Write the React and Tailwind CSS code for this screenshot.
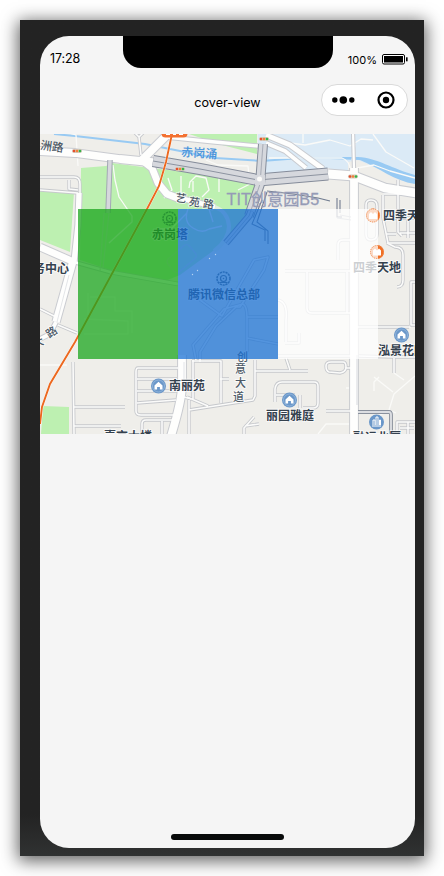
import React from 'react';

const GREEN = '#bdf0b1';
const CJK = '"Noto Sans", "Noto Sans CJK SC", sans-serif';

const majorRoads = [
  ['M40 151 L75 153 L120 159 L160 163', 8],
  ['M166 136 L142 160', 8],
  ['M143 161 L152 168 L158 183 L167 194 L180 199', 7],
  ['M176 197 L215 207', 5],
  ['M40 247 L74 262', 7],
  ['M74 262 L110 272 L178 284', 3],
  ['M73 261 L56 322', 7.5],
  ['M56 322 L50 334 L40 339', 4],
  ['M79 193 L78 225 L74 262', 5.5],
  ['M182 355 V385 Q182 400 171 436', 8],
  ['M354 168 L354 436', 8],
  ['M353 131 L354 168', 2.4],
  ['M328 174 L354 176 L385 188 L416 193', 9],
  ['M166 137 L215 142 L258 146', 3.5],
  ['M266 135 L290 145 L323 169', 5],
  ['M266 143 L285 151 L306 168', 4],
];

const minorRoads = [
  'M134 132 L139 137 L144 132 M139 137 L141 155',
  'M40 177 H74 Q80 177 80 184 V194 M40 190 L78 193 M69 180 V189 L78 190',
  'M40 309 L56 317 M58 325 L77 333',
  'M73 362 L74 434 M74 407 H125 M74 426 H121',
  'M178 368 H138 Q136 368 136 372 V411 Q136 415 141 415 H176 M137 379 H177 M137 391 H177 M137 403 L176 400',
  'M142 434 V424 Q142 420 146 420 H172 M162 434 V421',
  'M193 360 V400 M189 400 V434 M192 361 H221 V403 M187 397 L208 406 M189 410 L240 402 L253 400 L255 396 V360 M220 379 H229',
  'M255 371 H308 M286 358 L290 370 M184 397 L191 399',
  'M275 402 V389 Q276 382 282 382 H314 Q318 382 318 386 V403 Q318 408 313 408 H303 M276 395 H295 M300 395 V408',
  'M244 434 V428 L254 417 M245 426 L259 424',
  'M326 366 Q326 362 331 362 H343 Q346 362 346 367 Q346 372 340 373 L329 372 Q326 371 326 366 Z M345 368 H352',
  'M326 411 H352 M359 356 L393 357 H415 M394 358 V373',
  'M397 434 V422 H415 M400 428 H414 M408 422 V434',
  'M415 282 H411 V325 H415 M355 327 H409 M397 287 Q403 287 403 280 V255 Q403 247 395 247 L387 243',
  'M366 205 Q366 200 371 200 Q377 200 377 206 V234 Q377 240 371 240 Q366 240 366 234 Z',
  'M383 218 V195 M383 194 H415 M398 180 V232 L402 236 M388 218 H398 M383 218 L388 243 H415 M386 234 H396 M400 233 H415 M408 218 V238 M402 218 H415',
  'M338 260 V245 Q338 240 343 240 H352 M285 271 H352 M307 272 V308 Q307 313 312 313 H352 M347 272 V313',
  'M285 343 H299 V333 M278 356 H352 M278 300 Q288 302 286 320 V342',
  'M200 300 L222 316 L254 260 L268 257 L264 270 L240 307 L236 307 L216 326 L200 352 V362 M196 360 L193 345 L224 309 L243 304 Q247 306 247 318 V352 M247 317 H278 M247 338 L278 344',
];

const parkPaths = [
  'M60 130 L76 135 L78 166',
  'M113 165 L115 180 L119 197 L132 216 L132 222 L109 243',
  'M181 176 V199 M219 178 V192 M193 181 V192',
  'M168 178 L172 190 L164 198 M189 188 L190 182 L196 176 L206 178 L209 190 L202 197 M206 160 L218 165 L248 166 L250 184 L238 190',
  'M188 209 Q183 222 193 228 Q202 234 209 229 M209 229 L222 226 M160 229 L171 229 L187 213 M209 209 L213 222',
  'M303 132 V143 M283 142 L305 145 L330 140 L350 146 L361 139 L373 140 M373 134 L386 152 L414 168 M355 144 L352 160',
  'M269 158 H342 Q349 160 351 171 M357 168 L374 165 L390 171 L415 178',
  'M40 365 H67 M380 327 H411',
  'M374 391 V382 L379 377 M374 377 L393 392 M394 373 L404 380 M415 376 L394 394 L389 410 M350 388 H346 M318 434 L326 424 H350 M376 418 Q388 408 396 413',
  'M88 293 V315 M84 319 L128 321 V334 H84 M90 297 H115 V311 H132 V333',
];

function Roads() {
  return (
    <g fill="none" strokeLinejoin="round" strokeLinecap="butt">
      {parkPaths.map((d) => <path key={d} d={d} stroke="#fafaf8" strokeWidth="1.3" />)}
      <path d="M215 207 Q228 212 229 226 Q229 240 214 251" stroke="#e3efdf" strokeWidth="4" />
      {minorRoads.map((d) => <path key={d} d={d} stroke="#c6c8cc" strokeWidth="3.3" />)}
      {majorRoads.map(([d, w]) => <path key={d} d={d} stroke="#c9cbd0" strokeWidth={w + 1.8} />)}
      {minorRoads.map((d) => <path key={d} d={d} stroke="#fbfbfa" strokeWidth="1.6" />)}
      {majorRoads.map(([d, w]) => <path key={d} d={d} stroke="#fefefd" strokeWidth={w - 0.2} />)}
      <path d="M69 275 L57 322 M184 362 V385" stroke="#dcdee2" strokeWidth=".8" />
      <path d="M357 355 V405" stroke="#d7d9dd" strokeWidth="1" />
    </g>
  );
}

// Elevated expressways: dark edges with a grey surface.
function Viaduct({ d, width, edge = '#858c9a' }) {
  return (
    <g fill="none" strokeLinejoin="round">
      <path d={d} stroke={edge} strokeWidth={width} />
      <path d={d} stroke="#d6d8dd" strokeWidth={width - 2} />
    </g>
  );
}

function TrafficLight({ x, y }) {
  return (
    <g>
      <rect x={x - 5} y={y - 2} width="10" height="4" rx="2" fill="#d5c8ba" />
      <circle cx={x - 3} cy={y} r="1.3" fill="#e5502e" />
      <circle cx={x} cy={y} r="1.3" fill="#f08338" />
      <circle cx={x + 3} cy={y} r="1.3" fill="#36b44a" />
    </g>
  );
}

function HomePin({ x, y }) {
  return (
    <g>
      <circle cx={x} cy={y} r="7.5" fill="#6a97c9" />
      <circle cx={x} cy={y} r="6" fill="none" stroke="#9dbde0" strokeWidth=".7" />
      <path d={`M${x} ${y - 4.2} l4 3.8 v4 h-2.6 v-2.5 h-2.8 v2.500 h-2.6 v-4 z`} fill="#fff" />
    </g>
  );
}

function ShopPin({ x, y }) {
  return (
    <g>
      <circle cx={x} cy={y} r="7" fill="#f06f24" />
      <path d={`M${x - 4} ${y + 3.5} v-5 l2 -2 l2 2 l2 -2 l2 2 v5 z`} fill="#fff" />
    </g>
  );
}

function RingPin({ x, y }) {
  return (
    <g fill="none" stroke="#4c6072">
      <circle cx={x} cy={y} r="6.5" strokeWidth="1.5" strokeDasharray="2.2 .7" />
      <circle cx={x} cy={y} r="3" strokeWidth="1.2" />
      <circle cx={x} cy={y} r=".8" fill="#4c6072" stroke="none" />
      <path d={`M${x - 4} ${y + 4} h8`} strokeWidth="1" />
    </g>
  );
}

function Place({ x, y, children }) {
  return (
    <text x={x} y={y} fontSize="12" fontWeight="700" fill="#34414e" stroke="#fff" strokeWidth="1.6"
      strokeOpacity=".75" paintOrder="stroke" textAnchor="middle">{children}</text>
  );
}

function StreetChar({ x, y, angle = 0, children }) {
  return (
    <text x="0" y="4" textAnchor="middle" transform={`translate(${x} ${y}) rotate(${angle})`}
      stroke="#fff" strokeWidth="1.6" strokeOpacity=".8" paintOrder="stroke">{children}</text>
  );
}

function CityMap() {
  return (
    <svg className="block h-[300px] w-[375px]" viewBox="40 134 375 300" style={{ fontFamily: CJK }}>
      <rect x="40" y="134" width="375" height="300" fill="#efeeea" />
      <path d="M258 134 H415 V183 L386 172 L358 160 L348 162 V174 L328 168 L258 178 Z" fill="#dbeaf6" />
      <path d="M189 134 H257 V154 L222 145 Z" fill={GREEN} />
      <path d="M81 168 L106 166 L112 163 L143 167 L160 169 L200 174 L258 186 L250 212 L243 226 L228 240 L180 275 L165 281 L142 279 L110 270 L80 260 Z" fill={GREEN} />
      <path d="M40 190 L74 192 L70 252 L40 240 Z" fill={GREEN} />
      <path d="M43 406 L69 407 V434 H41 Z" fill={GREEN} />
      <path d="M54 134 L75 136 L145 144 L215 158 L262 161 L300 158 H345" fill="none" stroke="#98caf3" strokeWidth="2" />
      <path d="M330 157 H358 C378 158 392 169 415 175 V184 C394 181 380 168 360 160 L330 159 Z" fill="#98caf3" />
      <Roads />
      <Viaduct d="M153 161 L200 169 L258 180" width={12} />
      <Viaduct d="M258 180 L328 174" width={13} />
      <Viaduct d="M263 144 L260 184 L249 216" width={10} />
      <Viaduct d="M251 211 L249 216 L226 243" width={7} />
      <path d="M153 161 L200 169 L258 180 L328 174" fill="none" stroke="#8c93a0" strokeWidth="1" />
      <path d="M263 144 L260 184 L249 216 L226 243" fill="none" stroke="#9aa0ac" strokeWidth=".8" />
      <Viaduct d="M110 160 L108 213" width={5.5} edge="#a3a8b4" />
      <path d="M104 213 L100 271 M109 213 L103 268" fill="none" stroke="#d5dad5" strokeWidth="1" />
      <path d="M255 180 H265" stroke="#d6d8dd" strokeWidth="10" />
      <circle cx="259.500" cy="179" r="2.500" fill="#fafaf8" />
      <path d="M267 191 L293 194 L318 198 L330 201 M337 198 V217 H342 M340 200 V213 M262 200 L252 224 L265 230 V241 M267 192 L257 222 L268 231 V244" fill="none" stroke="#717c90" strokeWidth="1.1" />
      <path d="M340 215 L351 217 M337 218 L351 220" fill="none" stroke="#b9bdc5" strokeWidth="1" />
      <path d="M358 412 H389 Q391 412 391 415 V434" fill="none" stroke="#8a919d" strokeWidth="3.800" />
      <path d="M358 412 H389 Q391 412 391 415 V434" fill="none" stroke="#dcdee2" strokeWidth="1.900" />
      <path d="M172 134 L166 162 L159 186 L147 209 L75 342 L50 384 L42 407 L40 424" fill="none" stroke="#fff" strokeWidth="2.600" />
      <path d="M172 134 L166 162 L159 186 L147 209 L75 342 L50 384 L42 407 L40 424" fill="none" stroke="#ec681f" strokeWidth="1.900" />
      <rect x="161.500" y="128" width="26" height="9.500" rx="4" fill="#f37131" />
      <path d="M166 134.500 h4 m3 0 h3 m3 0 h4" stroke="#fff" strokeWidth="1.200" />
      <rect x="168" y="250" width="28" height="17" rx="4" transform="rotate(-40 182 259)" fill="none" stroke="#cdd6d2" strokeWidth="1" />
      <TrafficLight x={77} y={151} />
      <TrafficLight x={180} y={169} />
      <TrafficLight x={264} y={139} />
      <TrafficLight x={353} y={176.5} />

      <g fill="#4d5966" fontSize="11" fontWeight="500">
        <text x="40" y="149" fontSize="11.5" transform="rotate(8 40 149)">洲路</text>
        <StreetChar x={181} y={198} angle={8}>艺</StreetChar>
        <StreetChar x={194.500} y={202} angle={8}>苑</StreetChar>
        <StreetChar x={208.500} y={204} angle={8}>路</StreetChar>
        <StreetChar x={51.500} y={332} angle={-35}>路</StreetChar>
        <StreetChar x={38} y={342} angle={-20}>大</StreetChar>
        <StreetChar x={242.500} y={357}>创</StreetChar>
        <StreetChar x={240.500} y={369}>意</StreetChar>
        <StreetChar x={240.500} y={382.500}>大</StreetChar>
        <StreetChar x={238.500} y={397}>道</StreetChar>
      </g>
      <text x="181" y="156" fontSize="12" fill="#4a94dc" fontWeight="500" transform="rotate(4 181 156)">赤岗涌</text>

      <RingPin x={169.5} y={218.5} />
      <Place x={170} y={239}>赤岗塔</Place>
      <RingPin x={223.5} y={278.5} />
      <Place x={224} y={299}>腾讯微信总部</Place>
      <ShopPin x={373} y={215.5} />
      <Place x={407} y={220}>四季天地</Place>
      <ShopPin x={377} y={252} />
      <Place x={377} y={272}>四季天地</Place>
      <Place x={45} y={273}>商务中心</Place>
      <HomePin x={401.5} y={335} />
      <Place x={402} y={355}>泓景花园</Place>
      <HomePin x={158.5} y={386} />
      <Place x={187} y={390}>南丽苑</Place>
      <HomePin x={289.5} y={400} />
      <Place x={290} y={420}>丽园雅庭</Place>
      <circle cx="376.500" cy="422" r="7.500" fill="#6a97c9" />
      <path d="M372 426 h9 M373 425 v-5 h2 v5 M376 425 v-8 h2 v8 M379.500 425 v-5 h1 v5" fill="none" stroke="#fff" strokeWidth="1" />
      <Place x={128} y={441}>嘉京大楼</Place>
      <Place x={377} y={442}>融运北厦</Place>
    </svg>
  );
}

// Route dots and pin rims that stay visible above the coloured cover panels.
function CoverMarks() {
  return (
    <svg className="absolute left-0 top-0 h-[300px] w-[375px]" viewBox="40 134 375 300">
      <g fill="#b5d2f2">
        <circle cx="192.500" cy="274.500" r=".7" />
        <circle cx="197.500" cy="270.500" r=".7" />
        <circle cx="209.500" cy="258.500" r=".7" />
        <circle cx="215.500" cy="254.500" r=".7" />
      </g>
      <g fill="none" stroke="#f0925a" strokeWidth="1" strokeDasharray="1 1">
        <circle cx="373" cy="215.500" r="6.500" />
        <circle cx="377" cy="252" r="6.500" />
      </g>
    </svg>
  );
}

function StatusBar() {
  return (
    <div className="relative flex h-[44px] items-start justify-between pl-[10px] pr-[7px] text-black">
      <span className="pt-[14px] text-[12.5px] leading-[18px] tracking-[-0.1px]">17:28</span>
      <div className="absolute left-[83px] top-0 h-8 w-[210px] rounded-b-[18px] bg-black" />
      <div className="flex items-center pt-[15px]">
        <span className="mr-[5px] text-[11px] leading-[18px]">100%</span>
        <svg width="26" height="11" viewBox="0 0 26 11" className="-mt-[2px]">
          <rect x=".5" y=".5" width="22" height="9.500" rx="1.500" fill="#fff" stroke="#000" />
          <rect x="2" y="2" width="19" height="6.500" fill="#000" />
          <rect x="24" y="3.300" width="1.600" height="4" fill="#000" />
        </svg>
      </div>
    </div>
  );
}

function NavigationBar() {
  return (
    <div className="grid h-[54px] grid-cols-[1fr_auto_1fr] items-start pr-[7px]">
      <span className="col-start-2 pl-[7px] pt-[13px] text-[12.6px] leading-5 text-black">cover-view</span>
      <div className="mt-[4px] flex h-8 w-[87px] items-center justify-between justify-self-end rounded-full border border-[#dadada] bg-white pl-[10px] pr-[12px]">
        <svg width="23" height="8" viewBox="0 0 23 8">
          <circle cx="2.800" cy="4" r="2.700" />
          <circle cx="11.300" cy="4" r="3.800" />
          <circle cx="19.800" cy="4" r="2.700" />
        </svg>
        <svg width="18" height="18" viewBox="0 0 18 18">
          <circle cx="9" cy="9" r="7.500" fill="none" stroke="#000" strokeWidth="2.200" />
          <circle cx="9" cy="9" r="3.200" />
        </svg>
      </div>
    </div>
  );
}

export default function App() {
  return (
    <div className="h-[876px] w-[444px] overflow-hidden bg-white p-5 font-['Inter','Liberation_Sans',sans-serif]">
      <div className="h-[836px] w-[404px] bg-linear-to-b from-[#232323] from-95% to-[#303232] pl-5 pt-4 shadow-[0_3px_16px_2px_rgba(0,0,0,0.62)]">
        <div className="relative h-[812px] w-[375px] overflow-hidden rounded-[29px] bg-[#f5f5f5]">
          <StatusBar />
          <NavigationBar />
          <div className="relative h-[300px]">
            <CityMap />
            <div className="absolute left-[38px] top-[75px] flex h-[150px] w-[300px]">
              <div className="w-[100px] bg-[#1ba61d]/75" />
              <div className="w-[100px] bg-[#1b72d4]/75" />
              <div className="w-[100px] bg-white/75" />
            </div>
            <CoverMarks />
            <span className="absolute left-[186.5px] top-[54px] whitespace-nowrap text-[16.2px] leading-[22px] text-[#959bb6] [-webkit-text-stroke:0.3px_#959bb6] font-['Liberation_Sans','Noto_Sans_CJK_SC',sans-serif]">TIT创意园B5</span>
          </div>
          <div className="absolute bottom-[8px] left-[131px] h-[6px] w-[113px] rounded-full bg-[#080a0a]" />
        </div>
      </div>
    </div>
  );
}
